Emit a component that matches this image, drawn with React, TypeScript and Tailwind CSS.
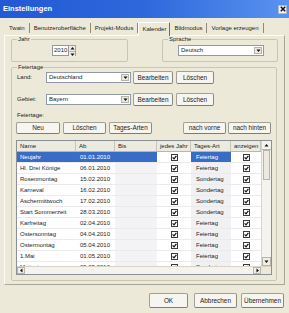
import React from 'react';

type Holiday = { name: string; from: string; kind: string };

const HOLIDAYS: Holiday[] = [
  { name: 'Neujahr', from: '01.01.2010', kind: 'Feiertag' },
  { name: 'Hl. Drei Könige', from: '06.01.2010', kind: 'Feiertag' },
  { name: 'Rosenmontag', from: '15.02.2010', kind: 'Sondertag' },
  { name: 'Karneval', from: '16.02.2010', kind: 'Sondertag' },
  { name: 'Aschermittwoch', from: '17.02.2010', kind: 'Sondertag' },
  { name: 'Start Sommerzeit', from: '28.03.2010', kind: 'Sondertag' },
  { name: 'Karfreitag', from: '02.04.2010', kind: 'Feiertag' },
  { name: 'Ostersonntag', from: '04.04.2010', kind: 'Feiertag' },
  { name: 'Ostermontag', from: '05.04.2010', kind: 'Feiertag' },
  { name: '1.Mai', from: '01.05.2010', kind: 'Feiertag' },
  { name: 'Muttertag', from: '09.05.2010', kind: 'Sondertag' },
];

function Check() {
  return (
    <svg width="7" height="7" viewBox="0 0 7 7">
      <rect x="0.5" y="0.5" width="6" height="6" fill="#fff" stroke="#3a3a3a" />
      <path d="M1.6 3.4 L3 4.9 L5.4 1.9" stroke="#111" strokeWidth="1.2" fill="none" />
    </svg>
  );
}

function Arrow({ dir }: { dir: 'up' | 'down' | 'left' | 'right' }) {
  const d = {
    up: 'M0.5 3.5 L2.5 1 L4.5 3.5 Z',
    down: 'M0.5 1.5 L2.5 4 L4.5 1.5 Z',
    left: 'M3.5 0.5 L1 2.5 L3.5 4.5 Z',
    right: 'M1.5 0.5 L4 2.5 L1.5 4.5 Z',
  }[dir];
  return (
    <svg width="5" height="5" viewBox="0 0 5 5">
      <path d={d} fill="#111" />
    </svg>
  );
}

function Btn({ label, w, h = 'h-[12px]' }: { label: string; w: string; h?: string }) {
  return (
    <div
      className={`${w} ${h} flex items-center justify-center bg-[#f6f5f0] border border-[#a3a195] border-r-[#8c8a7f] border-b-[#7f7d72] rounded-[2px] text-[6.4px]`}
    >
      {label}
    </div>
  );
}

function Combo({ value, w }: { value: string; w: string }) {
  return (
    <div className={`${w} h-[11px] flex bg-white border border-[#8f9aa6]`}>
      <span className="flex-1 pl-[2px] flex items-center text-[6px]">{value}</span>
      <div className="w-[8px] m-[1px] flex items-center justify-center bg-[#ece9e0] border border-[#b8b5a8]">
        <Arrow dir="down" />
      </div>
    </div>
  );
}

function Group({ label, className, children }: { label: string; className: string; children?: React.ReactNode }) {
  return (
    <div className={`relative border border-[#c9c6b6] rounded-[2px] ${className}`}>
      <span className="absolute -top-[4px] left-[5px] px-[1px] bg-[#ece9d8] text-[6px] leading-[7px]">{label}</span>
      {children}
    </div>
  );
}

const COLS = ['w-[59px]', 'w-[39px]', 'w-[42px]', 'w-[34px]', 'w-[40px]', 'w-[30px]'];

export default function App() {
  return (
    <div className="w-[289px] h-[313px] bg-[#ece9d8] flex flex-col overflow-hidden text-[#1c1c1c] font-['Liberation_Sans',Arial,sans-serif]">
      {/* title bar */}
      <div className="h-[18px] flex items-center justify-between pl-[3px] pr-[2px] bg-linear-to-r from-[#2259d4] via-[#2e68dc] to-[#5a92ee]">
        <span className="text-white font-bold text-[7.5px]">Einstellungen</span>
        <div className="w-[9px] h-[9px] bg-[#f2f2f2] border border-[#b0b8c8] flex items-center justify-center">
          <svg width="6" height="6" viewBox="0 0 6 6">
            <path d="M0.8 0.8 L5.2 5.2 M5.2 0.8 L0.8 5.2" stroke="#111" strokeWidth="1.5" />
          </svg>
        </div>
      </div>

      {/* tabs */}
      <div className="h-[14px] mt-[3px] pl-[5px] flex items-end text-[6px]">
        {['Twain', 'Benutzeroberfläche', 'Projekt-Modus'].map((t) => (
          <div key={t} className="h-[10px] mb-[2px] px-[4px] flex items-center border-r border-[#8d8b80]">{t}</div>
        ))}
        <div className="h-[14px] -mb-[1px] px-[3px] flex items-center bg-[#ece9d8] border border-b-0 border-l-white border-t-white border-r-[#6f6d64] relative z-10">
          Kalender
        </div>
        {['Bildmodus', 'Vorlage erzeugen'].map((t) => (
          <div key={t} className="h-[10px] mb-[2px] px-[4px] flex items-center border-r border-[#8d8b80]">{t}</div>
        ))}
      </div>

      {/* panel */}
      <div className="mx-[4px] h-[250px] border border-[#a9a798] border-l-[#fbfbf8] border-t-[#fbfbf8] px-[6px] pt-[3px] flex flex-col">
        <div className="flex justify-between">
          <Group label="Jahr" className="w-[117px] h-[23px] pl-[40px] pt-[5px]">
            <div className="flex">
              <div className="w-[17px] h-[11px] bg-white border border-[#8f9aa6] flex items-center pl-[1px] text-[6px]">2010</div>
              <div className="w-[7px] h-[11px] flex flex-col border border-l-0 border-[#a3a195]">
                <div className="flex-1 flex items-center justify-center bg-[#efede4] border-b border-[#b8b5a8]">
                  <Arrow dir="up" />
                </div>
                <div className="flex-1 flex items-center justify-center bg-[#efede4]">
                  <Arrow dir="down" />
                </div>
              </div>
            </div>
          </Group>
          <Group label="Sprache" className="w-[116px] h-[23px] pl-[15px] pt-[5px]">
            <Combo value="Deutsch" w="w-[86px]" />
          </Group>
        </div>

        <Group label="Feiertage" className="mt-[5px] w-[266px] h-[214px] pl-[5px] pt-[3px] flex flex-col">
          {[
            ['Land:', 'Deutschland', 'mt-0'],
            ['Gebiet:', 'Bayern', 'mt-[9px]'],
          ].map(([lab, val, mt]) => (
            <div key={lab} className={`flex items-center h-[13px] ${mt}`}>
              <span className="w-[29px] text-[6px]">{lab}</span>
              <Combo value={val} w="w-[85px]" />
              <div className="ml-[2px]">
                <Btn label="Bearbeiten" w="w-[40px]" h="h-[13px]" />
              </div>
              <div className="ml-[3px]">
                <Btn label="Löschen" w="w-[38px]" h="h-[13px]" />
              </div>
            </div>
          ))}
          <span className="mt-[6px] h-[7px] leading-[7px] text-[6px]">Feiertage:</span>
          <div className="mt-[3px] -ml-[1px] flex gap-[3px]">
            <Btn label="Neu" w="w-[44px]" />
            <Btn label="Löschen" w="w-[43px]" />
            <Btn label="Tages-Arten" w="w-[43px]" />
            <div className="ml-[28px] flex gap-[2px]">
              <Btn label="nach vorne" w="w-[43px]" />
              <Btn label="nach hinten" w="w-[43px]" />
            </div>
          </div>

          {/* grid */}
          <div className="mt-[6px] -ml-[1px] w-[256px] h-[135px] border border-[#8a8f98] bg-white flex flex-col text-[6px]">
            <div className="flex flex-1 min-h-0">
              <div className="w-[244px] flex flex-col overflow-hidden">
                <div className="h-[11px] flex bg-[#ebeadf] border-b border-[#b9b7aa] shrink-0">
                  {['Name', 'Ab', 'Bis', 'jedes Jahr', 'Tages-Art', 'anzeigen'].map((h, i) => (
                    <div key={h} className={`${COLS[i]} shrink-0 pl-[3px] flex items-center border-r border-[#c6c4b7]`}>
                      {h}
                    </div>
                  ))}
                </div>
                {HOLIDAYS.map((r, idx) => {
                  const sel = idx === 0;
                  const txt = sel ? 'bg-[#3a6cc6] text-white' : '';
                  return (
                    <div key={r.name} className="h-[11px] flex shrink-0 border-b border-[#ebebeb]">
                      <div className={`${COLS[0]} shrink-0 pl-[3px] flex items-center ${txt}`}>{r.name}</div>
                      <div className={`${COLS[1]} shrink-0 pl-[4px] flex items-center ${txt}`}>{r.from}</div>
                      <div className={`${COLS[2]} shrink-0 flex items-center ${sel ? txt : 'bg-[#f3f3f6]'}`}></div>
                      <div className={`${COLS[3]} shrink-0 flex items-center justify-center`}>
                        <Check />
                      </div>
                      <div className={`${COLS[4]} shrink-0 pl-[5px] flex items-center ${sel ? txt : 'bg-[#f1f1f3]'}`}>{r.kind}</div>
                      <div className={`${COLS[5]} shrink-0 flex items-center justify-center`}>
                        <Check />
                      </div>
                    </div>
                  );
                })}
              </div>
              {/* vertical scrollbar */}
              <div className="w-[10px] flex flex-col bg-[#f4f3ee] border-l border-[#d6d4c8]">
                <div className="h-[9px] flex items-center justify-center border-b border-[#b8b5a8]">
                  <Arrow dir="up" />
                </div>
                <div className="h-[30px] mx-[1px] border border-[#b8b5a8] bg-[#ece9df]"></div>
                <div className="flex-1"></div>
                <div className="h-[9px] flex items-center justify-center border border-[#b8b5a8] bg-[#efede4]">
                  <Arrow dir="down" />
                </div>
              </div>
            </div>
            {/* horizontal scrollbar */}
            <div className="h-[8px] flex bg-[#f4f3ee] border-t border-[#d6d4c8]">
              <div className="w-[8px] flex items-center justify-center border border-[#b8b5a8] bg-[#efede4]">
                <Arrow dir="left" />
              </div>
              <div className="flex-1"></div>
              <div className="w-[8px] flex items-center justify-center border border-[#b8b5a8] bg-[#efede4]">
                <Arrow dir="right" />
              </div>
              <div className="w-[10px] bg-[#ece9d8]"></div>
            </div>
          </div>
        </Group>
      </div>

      {/* dialog buttons */}
      <div className="mt-[8px] pr-[5px] flex justify-end">
        <Btn label="OK" w="w-[39px]" h="h-[15px]" />
        <div className="ml-[6px]">
          <Btn label="Abbrechen" w="w-[43px]" h="h-[15px]" />
        </div>
        <div className="ml-[4px]">
          <Btn label="Übernehmen" w="w-[43px]" h="h-[15px]" />
        </div>
      </div>
    </div>
  );
}
